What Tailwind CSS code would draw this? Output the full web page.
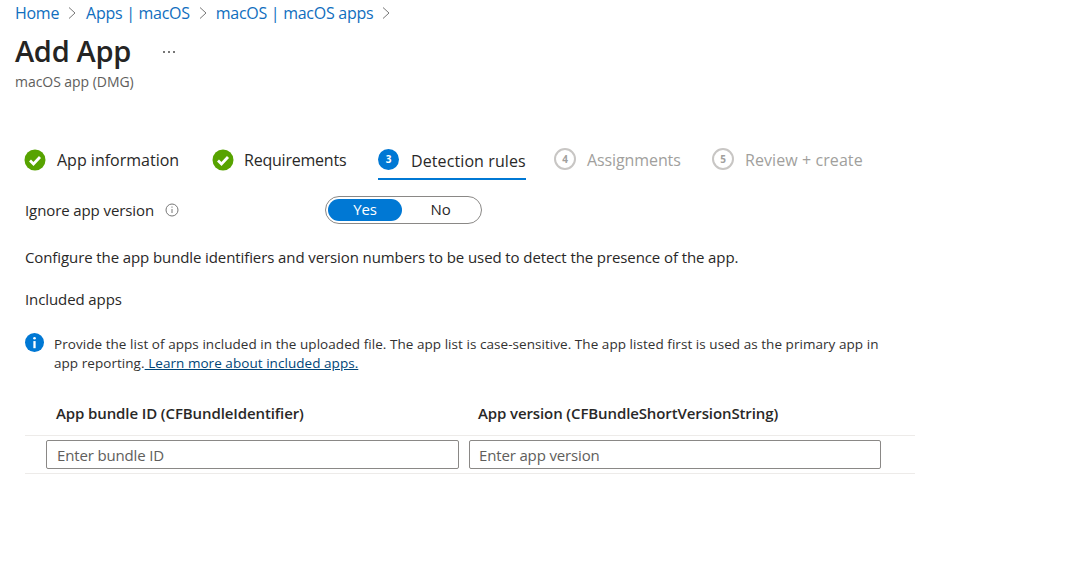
<!DOCTYPE html>
<html lang="en">
<head>
<meta charset="utf-8">
<title>Add App</title>
<script src="https://cdn.jsdelivr.net/npm/@tailwindcss/browser@4"></script>
</head>
<body class="bg-white w-[1084px] h-[570px] overflow-hidden font-['Open_Sans',sans-serif] text-[#292827]">
  <nav class="flex items-center h-[25px] pl-[15px] text-[16px] text-[#106ebe] tracking-[-0.28px]">
    <span>Home</span>
    <svg class="w-[10px] h-[14px] ml-[8px] mr-[9px]" viewBox="0 0 10 14" fill="none" stroke="#777" stroke-width="1"><path d="M2 1.500 8 7 2 12.500"/></svg>
    <span>Apps | macOS</span>
    <svg class="w-[10px] h-[14px] ml-[8px] mr-[8px]" viewBox="0 0 10 14" fill="none" stroke="#777" stroke-width="1"><path d="M2 1.500 8 7 2 12.500"/></svg>
    <span>macOS | macOS apps</span>
    <svg class="w-[10px] h-[14px] ml-[8px]" viewBox="0 0 10 14" fill="none" stroke="#777" stroke-width="1"><path d="M2 1.500 8 7 2 12.500"/></svg>
  </nav>
  <div class="flex items-center h-[52px] pl-[15px]">
    <h1 class="text-[29px] font-semibold leading-[36px] tracking-[-0.3px] text-[#252423]">Add App</h1>
    <span class="ml-[32px] flex gap-[3px] mt-[2px]"><i class="w-[2px] h-[2px] bg-[#777]"></i><i class="w-[2px] h-[2px] bg-[#777]"></i><i class="w-[2px] h-[2px] bg-[#777]"></i></span>
  </div>
  <p class="pl-[15px] text-[14px] leading-[17px] -mt-[4px] text-[#605e5c] tracking-[-0.05px]">macOS app (DMG)</p>

  <div class="flex items-start ml-[24px] mt-[51px] h-[47px] text-[16px]">
    <div class="flex items-center h-[38px] w-[188px] gap-[11px]">
      <svg class="w-[22px] h-[22px] -mt-[1px]" viewBox="0 0 22 22"><circle cx="11" cy="11" r="10.500" fill="#57a300"/><path d="M6 11.500 9.500 15 16 8" fill="none" stroke="#fff" stroke-width="2.800"/></svg>
      <span>App information</span>
    </div>
    <div class="flex items-center h-[38px] w-[166px] gap-[10px]">
      <svg class="w-[22px] h-[22px] -mt-[1px]" viewBox="0 0 22 22"><circle cx="11" cy="11" r="10.500" fill="#57a300"/><path d="M6 11.500 9.500 15 16 8" fill="none" stroke="#fff" stroke-width="2.800"/></svg>
      <span class="tracking-[-0.22px]">Requirements</span>
    </div>
    <div class="flex items-center h-[39px] w-[148px] gap-[12px] pt-[2px] border-b-2 border-[#0078d4] font-medium">
      <span class="w-[21px] h-[21px] rounded-full bg-[#0078d4] text-white text-[10px] font-bold flex items-center justify-center -mt-[3px]">3</span>
      <span class="tracking-[0.1px]">Detection rules</span>
    </div>
    <div class="flex items-center h-[38px] ml-[28px] w-[158px] gap-[11px] text-[#a19f9d]">
      <span class="w-[22px] h-[22px] rounded-full border-2 border-[#c8c6c4] text-[#a19f9d] text-[10px] font-bold flex items-center justify-center -mt-[2px]">4</span>
      <span class="tracking-[-0.1px]">Assignments</span>
    </div>
    <div class="flex items-center h-[38px] gap-[11px] text-[#a19f9d]">
      <span class="w-[22px] h-[22px] rounded-full border-2 border-[#c8c6c4] text-[#a19f9d] text-[10px] font-bold flex items-center justify-center -mt-[2px]">5</span>
      <span class="tracking-[0.08px]">Review + create</span>
    </div>
  </div>

  <div class="flex items-center ml-[25px] mt-[7px] h-[29px] text-[15px] tracking-[-0.1px]">
    <span class="pt-[1px]">Ignore app version</span>
    <svg class="w-[14px] h-[14px] ml-[11px]" viewBox="0 0 14 14" fill="none"><circle cx="7" cy="7" r="6" stroke="#777"/><path d="M7 6v4M7 3.500v1.200" stroke="#777"/></svg>
    <div class="ml-[146px] w-[157px] h-[28px] rounded-full border border-[#8a8886] p-[2px] flex">
      <span class="w-[74px] h-[22px] rounded-full bg-[#0078d4] text-white flex items-center justify-center">Yes</span>
      <span class="w-[77px] h-[22px] flex items-center justify-center">No</span>
    </div>
  </div>

  <p class="ml-[25px] mt-[23px] text-[15px] leading-[20px] tracking-[-0.1px]">Configure the app bundle identifiers and version numbers to be used to detect the presence of the app.</p>
  <p class="ml-[25px] mt-[22px] text-[15px] leading-[20px] tracking-[-0.1px]">Included apps</p>

  <div class="flex ml-[25px] mt-[26px] w-[864px]">
    <svg class="w-[19px] h-[19px] shrink-0 -mt-[2px]" viewBox="0 0 20 20"><circle cx="10" cy="10" r="10" fill="#0078d4"/><circle cx="10" cy="5.500" r="1.400" fill="#fff"/><rect x="8.800" y="8.500" width="2.400" height="7.500" fill="#fff"/></svg>
    <p class="ml-[10px] text-[13.500px] leading-[19px] tracking-[0.05px] text-[#323130]">Provide the list of apps included in the uploaded file. The app list is case-sensitive. The app listed first is used as the primary app in app reporting.<span class="text-[#004578] underline"> Learn more about included apps.</span></p>
  </div>

  <div class="ml-[25px] mt-[18px] w-[890px]">
    <div class="flex h-[45px] items-center border-b border-[#edebe9] text-[15px] font-semibold tracking-[-0.11px]">
      <span class="ml-[31px] w-[422px]">App bundle ID (CFBundleIdentifier)</span>
      <span>App version (CFBundleShortVersionString)</span>
    </div>
    <div class="flex h-[38px] items-center gap-[10px] pl-[21px] border-b border-[#edebe9]">
      <input class="w-[413px] h-[29px] border border-[#8a8886] rounded-[2px] px-[10px] text-[15px] tracking-[-0.15px] placeholder:text-[#605e5c]" placeholder="Enter bundle ID">
      <input class="w-[412px] h-[29px] border border-[#8a8886] rounded-[2px] pl-[9px] pr-[10px] text-[15px] tracking-[-0.15px] placeholder:text-[#605e5c]" placeholder="Enter app version">
    </div>
  </div>
</body>
</html>
